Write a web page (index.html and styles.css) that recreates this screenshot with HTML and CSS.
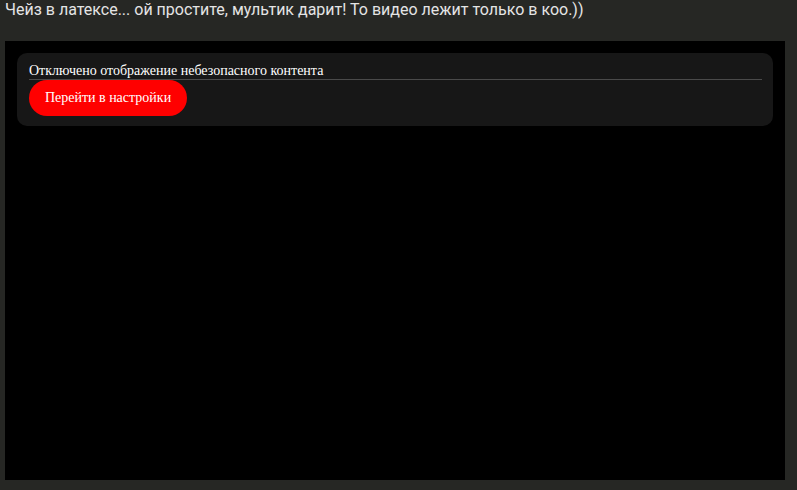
FILE: index.html
```html
<!DOCTYPE html>
<html lang="ru">
<head>
<meta charset="utf-8">
<link rel="stylesheet" href="styles.css">
</head>
<body>
<div class="title">Чейз в латексе... ой простите, мультик дарит! То видео лежит только в коо.))</div>
<div class="player">
  <div class="card">
    <div class="card-head">Отключено отображение небезопасного контента</div>
    <button class="btn">Перейти в настройки</button>
  </div>
</div>
</body>
</html>
```
FILE: styles.css
```css
html, body {
  margin: 0;
  padding: 0;
  background: #262724;
  height: 490px;
  overflow: hidden;
}
body {
  padding: 0 12px 0 5px;
}
.title {
  font-family: Roboto, "Liberation Sans", sans-serif;
  font-size: 16px;
  color: #e4e4e4;
  height: 41px;
  line-height: 20px;
  white-space: nowrap;
}
.player {
  background: #000;
  height: 415px;
  padding: 12px;
}
.card {
  background: #171717;
  border-radius: 10px;
  padding: 10px 11px 10px 12px;
}
.card-head {
  font-family: "Liberation Serif", serif;
  font-size: 14px;
  color: #fff;
  line-height: 16px;
  border-bottom: 1px solid #4a4a4a;
}
.btn {
  display: block;
  background: #ff0000;
  color: #fff;
  border: none;
  border-radius: 18px;
  height: 36px;
  width: 158px;
  font-family: "Liberation Serif", serif;
  font-size: 14px;
  padding: 0;
}
```
